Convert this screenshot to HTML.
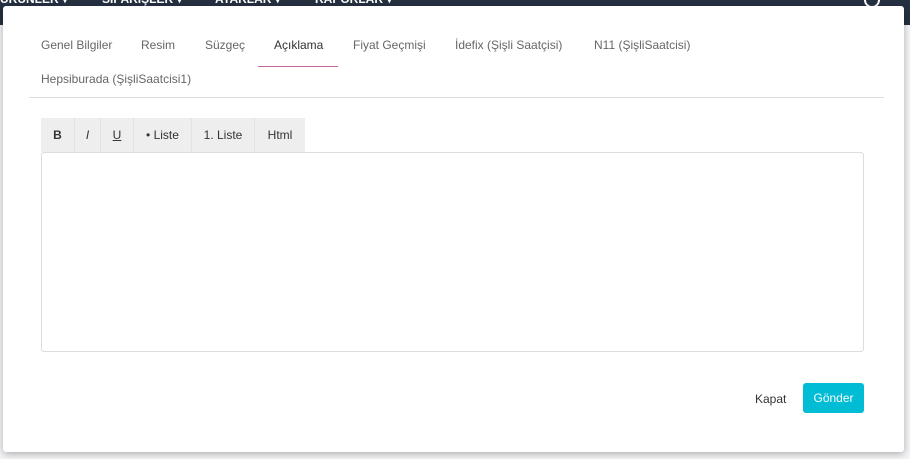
<!DOCTYPE html>
<html><head><style>
body{margin:0;width:910px;height:459px;overflow:hidden;background:#f4f5f7;font-family:"Liberation Sans",sans-serif;position:relative}
.nav{position:absolute;left:0;top:0;width:910px;height:25px;background:#253041;color:#fff;font-size:12px;font-weight:bold}
.nav span{position:absolute;top:-8px}
.srch{position:absolute;left:864px;top:-8px;width:12px;height:12px;border:2px solid #fff;border-radius:50%}
.modal{position:absolute;left:3px;top:6px;width:901px;height:446px;background:#fff;border-radius:3px;box-shadow:0 2px 8px rgba(0,0,0,.3)}
.tabs{position:absolute;left:26px;top:20px;width:855px;height:71px;border-bottom:1px solid #ddd;font-size:12px;color:#666}
.tab{position:absolute;top:12px}
.ul{position:absolute;left:229px;top:40px;width:80px;height:1px;background:#c5689d}
.tb{position:absolute;left:38px;top:112px;height:34px;display:flex}
.tb div{background:#eee;font-size:12px;color:#333;line-height:34px;text-align:center;border-right:1px solid #e2e2e2;box-sizing:border-box}
.area{position:absolute;left:38px;top:146px;width:821px;height:198px;border:1px solid #ddd;border-radius:3px}
.kapat{position:absolute;left:752px;top:386px;font-size:12px;color:#333}
.btn{position:absolute;left:800px;top:377px;width:61px;height:30px;background:#00bcd4;color:#fff;font-size:12px;line-height:30px;text-align:center;border-radius:3px}
</style></head><body>
<div class="nav"><span style="left:0">ÜRÜNLER ▾</span><span style="left:102px">SİPARİŞLER ▾</span><span style="left:215px">AYARLAR ▾</span><span style="left:315px">RAPORLAR ▾</span><div class="srch"></div></div>
<div class="modal">
<div class="tabs">
<span class="tab" style="left:12px">Genel Bilgiler</span>
<span class="tab" style="left:112px">Resim</span>
<span class="tab" style="left:176px">Süzgeç</span>
<span class="tab" style="left:245px;color:#333">Açıklama</span>
<span class="tab" style="left:324px">Fiyat Geçmişi</span>
<span class="tab" style="left:426px">İdefix (Şişli Saatçisi)</span>
<span class="tab" style="left:565px">N11 (ŞişliSaatcisi)</span>
<span class="tab" style="left:12px;top:46px">Hepsiburada (ŞişliSaatcisi1)</span>
<div class="ul"></div>
</div>
<div class="tb"><div style="font-weight:bold;width:34px">B</div><div style="font-style:italic;width:26px">I</div><div style="text-decoration:underline;width:33px">U</div><div style="width:58px">• Liste</div><div style="width:63px">1. Liste</div><div style="border:none;width:50px">Html</div></div>
<div class="area"></div>
<div class="kapat">Kapat</div>
<div class="btn">Gönder</div>
</div>
</body></html>
